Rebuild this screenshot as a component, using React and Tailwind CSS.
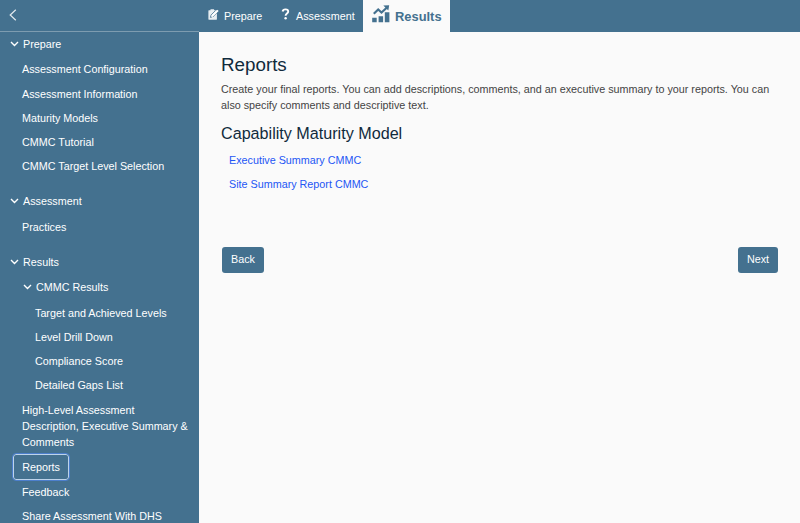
function Chevron({ className = '' }) {
  return (
    <svg viewBox="0 0 9 6" className={`h-[6px] w-[9px] shrink-0 ${className}`} fill="none" stroke="currentColor" strokeWidth="1.4">
      <path d="M1 1l3.5 3.5L8 1" />
    </svg>
  )
}

function Group({ label, className = '' }) {
  return (
    <div className={`flex h-6 items-center gap-1 ${className}`}>
      <Chevron />
      <span>{label}</span>
    </div>
  )
}

function Items({ labels, className = '' }) {
  return (
    <div className={className}>
      {labels.map((label) => (
        <div key={label} className="flex h-[24.2px] items-center">{label}</div>
      ))}
    </div>
  )
}

function PrepareIcon() {
  return (
    <svg viewBox="0 0 11 11" className="mb-[3px] h-[11px] w-[11px]">
      <path fill="currentColor" fillOpacity=".88" d="M.9 1.2h1.6V.3h3.6v.9h2.3c.3 0 .5.2.5.5v8.6c0 .3-.2.5-.5.5H.9c-.3 0-.5-.2-.5-.5V1.7c0-.3.2-.5.5-.5z" />
      <path fill="none" stroke="#44718f" strokeWidth=".8" d="M4.2 7.9l-1.8.5.7-2.5L7.6 1.5M5 7.7l4.7-4.6" />
      <path fill="currentColor" d="M3.2 7.7l.6-1.6L9.3.7l1.4 1.4-5.6 5.2z" />
    </svg>
  )
}

function ResultsIcon() {
  return (
    <svg viewBox="0 0 19 18" className="h-[18px] w-[19px]" fill="currentColor">
      <path d="M.2 12.7h4.5v4.5H.2zM6.6 11.2h4.5v6H6.6zM12.8 7.3h4.6v9.9h-4.6z" />
      <path fill="none" stroke="currentColor" strokeWidth="2.2" d="M1.8 8.7l4.4-4.2 3.3 3L14.7 2.8" />
      <path d="M11.3.5L17.2.2l-.9 5.4z" />
    </svg>
  )
}

export default function App() {
  return (
    <div className="flex h-[523px] w-[800px] flex-col overflow-hidden bg-[#fafafa] font-['Liberation_Sans',Arial,sans-serif] text-[10.77px] leading-4 text-[#444]">
      <header className="flex h-8 shrink-0 bg-[#44718f] text-white">
        <div className="flex w-[199px] items-center border-b border-[#7d9cb0] pb-[2px] pl-[9px]">
          <svg viewBox="0 0 8 12" className="h-3 w-2" fill="none" stroke="currentColor" strokeOpacity=".85" strokeWidth="1.2">
            <path d="M6.8.8L1.2 6l5.6 5.2" />
          </svg>
        </div>
        <div className="flex w-[73px] items-center pl-[9px]">
          <PrepareIcon />
          <span className="ml-[5px]">Prepare</span>
        </div>
        <div className="flex w-[91px] items-center pl-[9px]">
          <svg viewBox="0 0 9 12" className="mb-[4px] h-[12px] w-[9px]">
            <path d="M1.6 3.5C2 .7 7.2.7 7.2 3.6c0 2-2.6 2-2.6 4.2" fill="none" stroke="currentColor" strokeWidth="1.9" />
            <circle cx="4.6" cy="10.2" r="1.2" fill="currentColor" />
          </svg>
          <span className="ml-[6px]">Assessment</span>
        </div>
        <div className="flex w-[87px] items-center bg-[#fafafa] pl-[9px] text-[#44718f]">
          <div className="mb-[4px]"><ResultsIcon /></div>
          <span className="ml-1 pt-px text-[12.9px] font-bold">Results</span>
        </div>
      </header>
      <div className="flex min-h-0 flex-1">
        <nav className="w-[199px] shrink-0 overflow-hidden bg-[#44718f] text-white">
          <Group label="Prepare" className="pl-[10px]" />
          <Items className="mt-[1.3px] pl-[22px]" labels={['Assessment Configuration', 'Assessment Information', 'Maturity Models', 'CMMC Tutorial', 'CMMC Target Level Selection']} />
          <Group label="Assessment" className="mt-[11px] pl-[10px]" />
          <Items className="mt-[1.5px] pl-[22px]" labels={['Practices']} />
          <Group label="Results" className="mt-[11px] pl-[10px]" />
          <Group label="CMMC Results" className="mt-[1.3px] pl-[23px]" />
          <Items className="mt-[1.5px] pl-[35px]" labels={['Target and Achieved Levels', 'Level Drill Down', 'Compliance Score', 'Detailed Gaps List']} />
          <div className="mt-[5px] w-[190px] pl-[22px]">High-Level Assessment Description, Executive Summary &amp; Comments</div>
          <div className="mt-[3.5px] ml-[13px] flex h-[26px] w-14 items-center justify-center rounded-[3px] border border-[#bdd3ea] outline outline-[0.5px] outline-[#4c7fcc]">Reports</div>
          <Items className="-mt-[0.3px] pl-[22px]" labels={['Feedback', 'Share Assessment With DHS']} />
        </nav>
        <main className="flex-1 pt-[22px] pr-[22px] pl-[22px]">
          <h1 className="text-[18.8px] leading-[22px] text-[#102a3c]">Reports</h1>
          <p className="mt-[5px] whitespace-nowrap">
            Create your final reports. You can add descriptions, comments, and an executive summary to your reports. You can
            <br />
            also specify comments and descriptive text.
          </p>
          <h2 className="mt-[10px] text-[16.15px] leading-5 text-[#102a3c]">Capability Maturity Model</h2>
          <div className="mt-[5px] pl-2 text-[#2456f5]">
            <div className="flex h-6 items-center"><a>Executive Summary CMMC</a></div>
            <div className="flex h-6 items-center"><a>Site Summary Report CMMC</a></div>
          </div>
          <div className="mt-[51px] flex justify-between pl-px">
            <button className="h-[26px] w-[42px] rounded-[3px] bg-[#44718f] pb-[2px] text-white">Back</button>
            <button className="h-[26px] w-10 rounded-[3px] bg-[#44718f] pb-[2px] text-white">Next</button>
          </div>
        </main>
      </div>
    </div>
  )
}
